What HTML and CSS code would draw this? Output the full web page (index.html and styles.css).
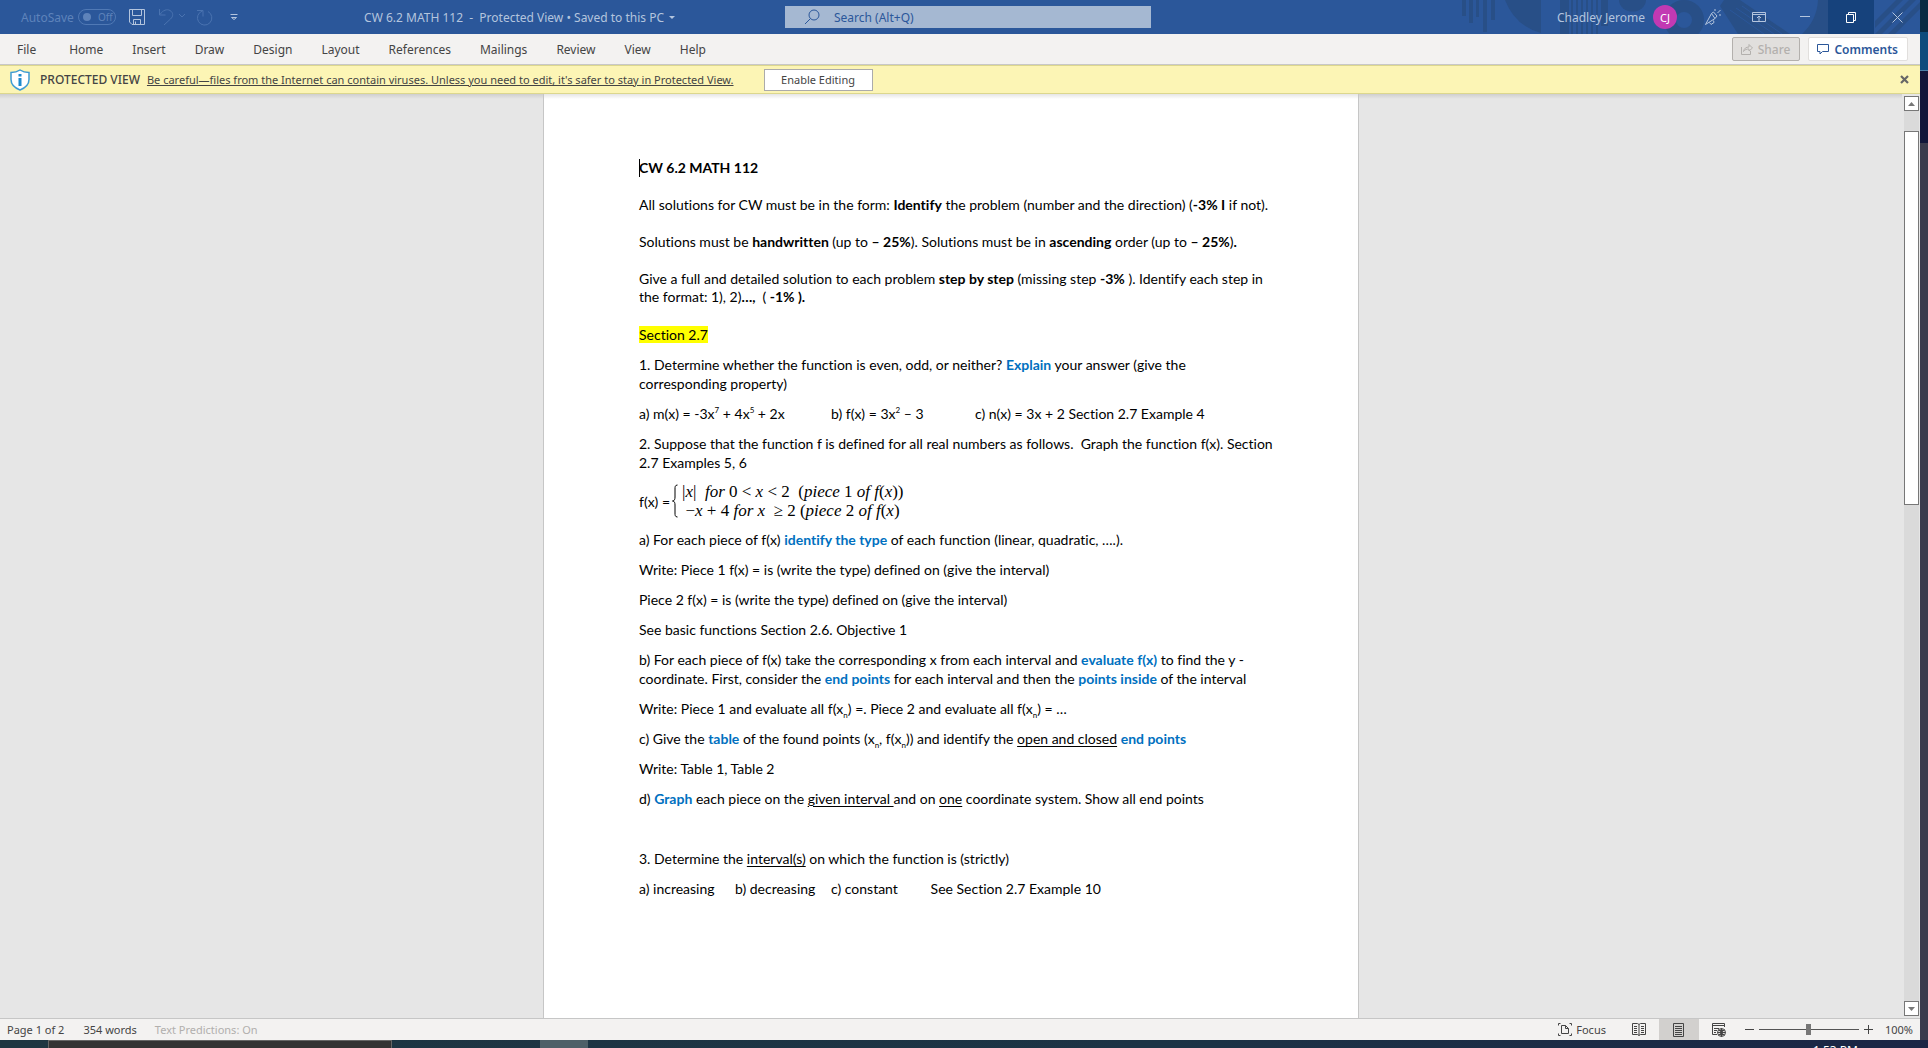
FILE: index.html
```html
<!DOCTYPE html>
<html lang="en">
<head>
<meta charset="utf-8">
<title>CW 6.2 MATH 112 - Protected View</title>
<link rel="stylesheet" href="styles.css">
</head>
<body>
<div class="desktop">
  <div class="app">
    <header class="titlebar">
      <svg class="pattern" width="480" height="34" viewBox="0 0 480 34" aria-hidden="true">
        <g fill="#284f87">
          <path d="M22 0h4v16h-4zM29 0h4v23h-4zM36 0h3v17h-3zM43 0h4v32h-4zM51 0h4v20h-4z"/>
          <path d="M65 0h36v33Q75 26 65 0z"/>
          <path d="M179 0h27a13.500 11.500 0 0 1-27 0z"/>
          <path d="M120 0h9v34h-9zM131 0h2v34h-2zM136 0h2v34h-2zM141 0h2v34h-2zM146 0h2v34h-2zM151 0h2v34h-2zM156 0h2v34h-2zM161 0h7v26h-7z"/>
          <path d="M284 0h16l50 34h-52l-18-28z"/>
          <path d="M378 0h10v34h-26q15-14 16-34z"/>
          <path d="M456 0h7l-28 28v-7zM469 0h7l-34 34h-7zM480 2v7l-25 25h-7z"/>
        </g>
        <circle cx="244" cy="20" r="14" fill="none" stroke="#284f87" stroke-width="12"/>
        <path d="M290 10l34 24M296 8l38 26M302 6l40 28" stroke="#2b579a"/>
      </svg>
      <div class="quick">
        <span class="autosave">AutoSave</span>
        <button class="toggle" disabled><i></i>Off</button>
        <button class="tool save" aria-label="Save"><svg width="16" height="16" viewBox="0 0 16 16"><path d="M.5.5h15v15H3L.5 13zM3.500.5v6h9v-6M4.500 15.500v-5h7v5M6.500 15v-2.500"/></svg></button>
        <button class="tool undo faint" aria-label="Undo"><svg width="28" height="18" viewBox="0 0 28 18"><path d="M1.500 1v6h6M2 6.500C5 2 9 .8 12 2.500c3.500 2 3.500 6 .5 8.500L6 17M21 6l3 3 3-3"/></svg></button>
        <button class="tool redo faint" aria-label="Redo"><svg width="17" height="17" viewBox="0 0 17 17"><path d="M1 1.500h6v6M6.500 2a7.200 7.200 0 1 0 5.500.5"/></svg></button>
        <button class="tool more" aria-label="Customize Quick Access Toolbar"><svg width="8" height="7" viewBox="0 0 8 7"><path d="M.5.5h7M1.500 3.500l2.500 2 2.500-2z"/></svg></button>
        <h1 class="doc-name">CW 6.2 MATH 112&nbsp; -&nbsp; Protected View • Saved to this PC<i class="caret"></i></h1>
      </div>
      <label class="search"><svg width="16" height="16" viewBox="0 0 16 16"><circle cx="10" cy="6" r="5"/><path d="M6.500 9.500L1 15"/></svg><input type="search" placeholder="Search (Alt+Q)" aria-label="Search"></label>
      <div class="account">
        <span>Chadley Jerome</span>
        <button class="avatar">CJ</button>
        <button class="win" aria-label="Coming soon"><svg width="18" height="18" viewBox="0 0 18 18"><path d="M1.500 16.500l6-11L11 10.500zM7.500 5.500l2-1.500 3.500 4-2 2.500M5.500 14.500l1.500 2 3-2-.5-2M11 3V1M13.500 5l3-3M15 7h2"/></svg></button>
        <button class="win" aria-label="Ribbon display options"><svg width="14" height="12" viewBox="0 0 14 12"><path d="M.5 1.500h13v9H.5zM.5 3.500h13M7 10V5M5 7l2-2 2 2"/></svg></button>
        <button class="win" aria-label="Minimize"><svg width="10" height="11" viewBox="0 0 10 11"><path d="M0 4.500h10"/></svg></button>
        <button class="win current" aria-label="Restore"><svg width="10" height="11" viewBox="0 0 10 11"><path d="M.5 2.500h7v8h-7zM2.500 2V.5h7v8H8"/></svg></button>
        <button class="win" aria-label="Close"><svg width="11" height="11" viewBox="0 0 11 11"><path d="M.5.5l10 10M10.500.5l-10 10"/></svg></button>
      </div>
    </header>
    <nav class="ribbon">
      <button>File</button><button>Home</button><button>Insert</button><button>Draw</button><button>Design</button><button>Layout</button><button>References</button><button>Mailings</button><button>Review</button><button>View</button><button>Help</button>
      <button class="share" disabled><svg width="12" height="12" viewBox="0 0 12 12"><path d="M.5 4v7.500h9V8M2.500 8.500C3 5.500 5 4 8 4V1.500L11.500 5 8 8V6C5.500 6 4 6.500 2.500 8.500z"/></svg>Share</button>
      <button class="comments"><svg width="12" height="11" viewBox="0 0 12 11"><path d="M.5.5h11v7h-6L3 10V7.500H.5z"/></svg>Comments</button>
    </nav>
    <section class="banner">
      <svg width="20" height="22" viewBox="0 0 20 22"><path d="M10 1c3 2 6 2.500 9 2.500v7c0 5-4 8.500-9 10.500-5-2-9-5.500-9-10.500v-7C4 3.500 7 3 10 1z" fill="#fff" stroke="#3c9bd4" stroke-width="1.500"/><path d="M8.500 5h3v2.500h-3zM8.500 9h3v8h-3z" fill="#1e8bcd" stroke="none"/></svg>
      <strong>PROTECTED VIEW</strong>
      <a href="#">Be careful—files from the Internet can contain viruses. Unless you need to edit, it's safer to stay in Protected View.</a>
      <button class="enable">Enable Editing</button>
      <button class="dismiss" aria-label="Close"><svg width="9" height="9" viewBox="0 0 9 9"><path d="M1 1l7 7M8 1L1 8" stroke="#666" stroke-width="2.200"/></svg></button>
    </section>
    <div class="workspace">
      <main class="canvas">
        <article class="page">
          <p class="intro"><b><i class="cursor"></i>CW 6.2 MATH 112</b></p>
          <p class="intro">All solutions for CW must be in the form: <b>Identify</b> the problem (number and the direction) (<b>-3% I</b> if not).</p>
          <p class="intro">Solutions must be <b>handwritten</b> (up to <b>– 25%</b>). Solutions must be in <b>ascending</b> order (up to <b>– 25%</b>)<b>.</b></p>
          <p class="intro">Give a full and detailed solution to each problem <b>step by step</b> (missing step <b>-3%</b> ). Identify each step in<br>the format: 1), 2)<b>…,&nbsp; </b>( <b>-1% ).</b></p>
          <p><mark>Section 2.7</mark></p>
          <p>1. Determine whether the function is even, odd, or neither? <em>Explain</em> your answer (give the<br>corresponding property)</p>
          <p class="stops"><span class="stop-4">a) m(x) = -3x<sup>7</sup> + 4x<sup>5</sup> + 2x</span><span class="stop-3">b) f(x) = 3x<sup>2</sup> – 3</span><span>c) n(x) = 3x + 2 Section 2.7 Example 4</span></p>
          <p>2. Suppose that the function f is defined for all real numbers as follows.&nbsp; Graph the function f(x). Section<br>2.7 Examples 5, 6</p>
          <div class="formula">
            <span>f(x) =</span>
            <svg width="6" height="34" viewBox="0 0 6 34"><path d="M5.500 1C3 1 3 3 3 5v8c0 2-.5 4-2.500 4C2.500 17 3 19 3 21v8c0 2 0 4 2.500 4" fill="none" stroke="#000"/></svg>
            <div class="cases">
              <span>|<i>x</i>|&nbsp; <i>for</i> 0 &lt; <i>x</i> &lt; 2&nbsp; (<i>piece</i> 1 <i>of f</i>(<i>x</i>))</span>
              <span>&thinsp;−<i>x</i> + 4 <i>for x</i>&nbsp; ≥ 2 (<i>piece</i> 2 <i>of f</i>(<i>x</i>)</span>
            </div>
          </div>
          <p>a) For each piece of f(x) <em>identify the type</em> of each function (linear, quadratic, ….).</p>
          <p>Write: Piece 1 f(x) = is (write the type) defined on (give the interval)</p>
          <p>Piece 2 f(x) = is (write the type) defined on (give the interval)</p>
          <p>See basic functions Section 2.6. Objective 1</p>
          <p>b) For each piece of f(x) take the corresponding x from each interval and <em>evaluate f(x)</em> to find the y -<br>coordinate. First, consider the <em>end points</em> for each interval and then the <em>points inside</em> of the interval</p>
          <p>Write: Piece 1 and evaluate all f(x<sub>n</sub>) =. Piece 2 and evaluate all f(x<sub>n</sub>) = …</p>
          <p>c) Give the <em>table</em> of the found points (x<sub>n</sub>, f(x<sub>n</sub>)) and identify the <u>open and closed</u> <em>end points</em></p>
          <p>Write: Table 1, Table 2</p>
          <p>d) <em>Graph</em> each piece on the <u>given interval </u>and on <u>one</u> coordinate system. Show all end points</p>
          <p>&nbsp;</p>
          <p>3. Determine the <u>interval(s)</u> on which the function is (strictly)</p>
          <p class="stops"><span class="stop-2">a) increasing</span><span class="stop-2">b) decreasing</span><span class="stop-2">c) constant</span><span>&nbsp;See Section 2.7 Example 10</span></p>
        </article>
      </main>
      <div class="scroll">
        <button aria-label="Scroll up"><svg width="7" height="4" viewBox="0 0 7 4"><path d="M0 4h7L3.500 0z"/></svg></button>
        <div class="track"><div class="thumb"></div></div>
        <button aria-label="Scroll down"><svg width="7" height="4" viewBox="0 0 7 4"><path d="M0 0h7L3.500 4z"/></svg></button>
      </div>
    </div>
    <footer class="status">
      <span class="pages">Page 1 of 2</span><span class="words">354 words</span><span class="predict">Text Predictions: On</span>
      <button class="focus"><svg width="14" height="13" viewBox="0 0 14 13"><path d="M2.500.5h-2v2M.5 10.500v2h2M11.500.5h2v2M13.500 10.500v2h-2M3.500 2.500h4l3 3v5h-7zM7.500 2.500v3h3"/></svg>Focus</button>
      <button class="view" aria-label="Read mode"><svg width="14" height="13" viewBox="0 0 14 13"><path d="M.5.5h5l1.500 1 1.500-1h5v11h-5l-1.500 1-1.500-1h-5zM7 1.500v11M2 3.500h3M2 5.500h3M2 7.500h3M2 9.500h3M9 3.500h3M9 5.500h3M9 7.500h3M9 9.500h3"/></svg></button>
      <button class="view on" aria-label="Print layout"><svg width="11" height="14" viewBox="0 0 11 14"><path d="M.5.5h10v13H.5zM2 3.500h7M2 5.500h7M2 7.500h7M2 9.500h7M2 11.500h7"/></svg></button>
      <button class="view" aria-label="Web layout"><svg width="14" height="14" viewBox="0 0 14 14"><path d="M5 11.500H.5V.5h12V4M.5 2.500h12M2 5.500h5M2 7.500h3M2 9.500h2"/><circle cx="9.500" cy="9.500" r="4"/><path d="M5.500 9.500h8M9.500 5.500v8M6.500 7.500h6M6.500 11.500h6M9.500 5.500q-3 4 0 8q3-4 0-8"/></svg></button>
      <button class="zoom" aria-label="Zoom out"><svg width="9" height="9" viewBox="0 0 9 9"><path d="M0 4.500h9"/></svg></button>
      <input type="range" min="0" max="100" value="50" aria-label="Zoom">
      <button class="zoom" aria-label="Zoom in"><svg width="9" height="9" viewBox="0 0 9 9"><path d="M0 4.500h9M4.500 0v9"/></svg></button>
      <span class="percent">100%</span>
    </footer>
  </div>
  <aside class="edge"></aside>
</div>
<div class="taskbar"><div class="task-search"></div><div class="task-app"></div><time>1:53 PM</time></div>
</body>
</html>
```
FILE: styles.css
```css
* { box-sizing: border-box; }
body {
  margin: 0;
  height: 100vh;
  display: flex;
  flex-direction: column;
  overflow: hidden;
  font-family: "Noto Sans", "Open Sans", sans-serif;
  font-size: 12px;
  color: #444;
}
button, input { font: inherit; color: inherit; }
button { border: 0; padding: 0; background: none; display: flex; align-items: center; justify-content: center; }
svg { display: block; flex: none; fill: none; stroke: currentColor; }
.desktop { flex: 1; min-height: 0; display: flex; }
.app { flex: 1; min-width: 0; display: flex; flex-direction: column; }
.edge {
  width: 8px;
  background: linear-gradient(#082a43 0 32px, #0d4c7d 32px 70px, #4a80a8 70px 71px, #12163a 71px 143px, #3b3b4d 143px);
}

.titlebar {
  position: relative;
  flex: none;
  height: 34px;
  display: grid;
  grid-template-columns: 785fr 366px 769fr;
  align-items: center;
  background: #2b579a;
  color: #b4c5de;
}
.pattern { position: absolute; right: 0; top: 0; stroke: none; }
.quick { display: flex; align-items: center; padding-left: 21px; }
.autosave { color: #5e83ba; width: 57px; }
.toggle { width: 38px; height: 16px; border: 1px solid #5079b5; border-radius: 8px; color: #5e83ba; font-size: 10px; justify-content: flex-start; gap: 7px; padding-left: 4px; }
.toggle i { width: 8px; height: 8px; border-radius: 50%; background: #5e83ba; }
.save { margin-left: 13px; }
.undo { margin-left: 13px; }
.redo { margin-left: 10px; }
.more { margin-left: 17px; }
.faint { color: #4a73b0; }
.doc-name { margin: 0 110px 0 auto; font-size: 12px; font-weight: 400; display: flex; align-items: center; white-space: nowrap; }
.caret { border: 3px solid transparent; border-top-color: #b4c5de; border-bottom: 0; margin-left: 5px; }
.search { height: 22px; display: flex; align-items: center; background: #a5b8d2; color: #2b579a; padding-left: 19px; gap: 14px; }
.search input { flex: 1; min-width: 0; border: 0; padding: 0; background: none; outline: 0; }
.search input::placeholder { color: #2b579a; opacity: 1; }
.account { position: relative; display: flex; align-items: center; justify-content: flex-end; height: 34px; }
.avatar { width: 24px; height: 24px; border-radius: 50%; background: #c239b3; color: #fff; font-size: 11px; margin: 0 13px 0 8px; }
.win { width: 46px; height: 34px; }
.current { background: #16427c; color: #fff; }

.ribbon { flex: none; height: 31px; display: flex; align-items: center; gap: 1px; background: #f3f2f1; border-bottom: 1px solid #c8c8c8; padding: 0 12px 0 3px; }
.ribbon button { padding: 0 14px; }
.ribbon button:first-child { padding-right: 18px; }
.ribbon .share, .ribbon .comments { height: 24px; padding: 0 9px 0 8px; gap: 5px; border: 1px solid #e1dfdd; border-radius: 2px; }
.ribbon .share { margin-left: auto; background: #e1dfdd; border-color: #b3b0ad; color: #b3b0ad; font-weight: 500; }
.ribbon .comments { margin-left: 7px; background: #fff; color: #2b579a; font-weight: 600; }

.banner { flex: none; height: 29px; display: flex; align-items: center; background: #fcf5b5; border: solid #dcd78e; border-width: 1px 0; padding: 0 11px 0 10px; color: #444; white-space: nowrap; }
.banner strong { font-weight: 500; margin: 0 7px 0 10px; }
.banner a { color: inherit; font-size: 11px; }
.enable { width: 109px; height: 22px; margin-left: 30px; background: #fff; border: 1px solid #ababab; font-size: 11px; }
.dismiss { margin-left: auto; }

.workspace { flex: 1; min-height: 0; display: flex; background: #e6e6e6; }
.canvas { flex: 1; min-width: 0; display: flex; justify-content: center; overflow: hidden; }
.page {
  width: 816px;
  padding: 65px 0 0 95px;
  background: #fff;
  border: solid #c6c6c6;
  border-width: 0 1px;
  color: #000;
  font-family: Lato, sans-serif;
  font-size: 14px;
  font-variant-ligatures: none;
  line-height: 19px;
  white-space: nowrap;
}
.canvas, .page { background-image: linear-gradient(rgba(0, 0, 0, .1), transparent 5px); }
.page p { margin: 0 0 11px; }
.page .intro { line-height: 18px; margin-bottom: 19px; }
.cursor { position: absolute; width: 1px; height: 18px; background: #000; }
.page em { font-style: normal; font-weight: 700; color: #0070c0; }
.page u { text-underline-offset: 2px; }
mark { background: #ff0; }
sup, sub { font-size: 8px; line-height: 0; }
.stops { display: flex; }
.stop-4 { width: 192px; }
.stop-3 { width: 144px; }
.stop-2 { width: 96px; }
.formula { display: flex; align-items: center; gap: 2px; height: 36px; margin: 0 0 11px; }
.formula svg { margin-right: 2px; }
.cases { display: flex; flex-direction: column; font: 17px/19px "Liberation Serif", serif; }

.scroll { width: 18px; padding: 2px 1px 2px 2px; display: flex; flex-direction: column; }
.scroll button { height: 15px; background: #fff; border: 1px solid #777; }
.scroll svg { fill: #777; stroke: none; }
.track { flex: 1; background: #dadada; padding-top: 20px; }
.thumb { height: 43%; background: #fff; border: 1px solid #777; }

.status { flex: none; height: 22px; display: flex; align-items: center; background: #f3f2f1; border-top: 1px solid #c6c6c6; padding: 0 7px; font-size: 11px; }
.words { margin-left: 19px; }
.predict { margin-left: 18px; color: #b1afad; }
.focus { margin-left: auto; margin-right: 13px; gap: 4px; }
.view { width: 40px; height: 21px; }
.on { background: #d2d0ce; }
.zoom { width: 9px; }
.view + .zoom { margin-left: 6px; }
.status input { appearance: none; width: 100px; height: 12px; margin: 0 5px; background: linear-gradient(#555, #555) center / 100% 1px no-repeat; }
.status input::-webkit-slider-thumb { appearance: none; width: 5px; height: 11px; background: #777; }
.percent { margin-left: 12px; }

.taskbar { flex: none; position: relative; height: 8px; display: flex; overflow: hidden; background: linear-gradient(90deg, #1e3641 0, #1c3345 60%, #1b2545 100%); }
.task-search { width: 344px; margin-left: 48px; background: #333; border: 1px solid #666; border-bottom: 0; }
.task-app { width: 48px; margin-left: 148px; background: #4e6068; }
.taskbar time { margin: 3px 70px 0 auto; line-height: 16px; color: #fff; }
```
